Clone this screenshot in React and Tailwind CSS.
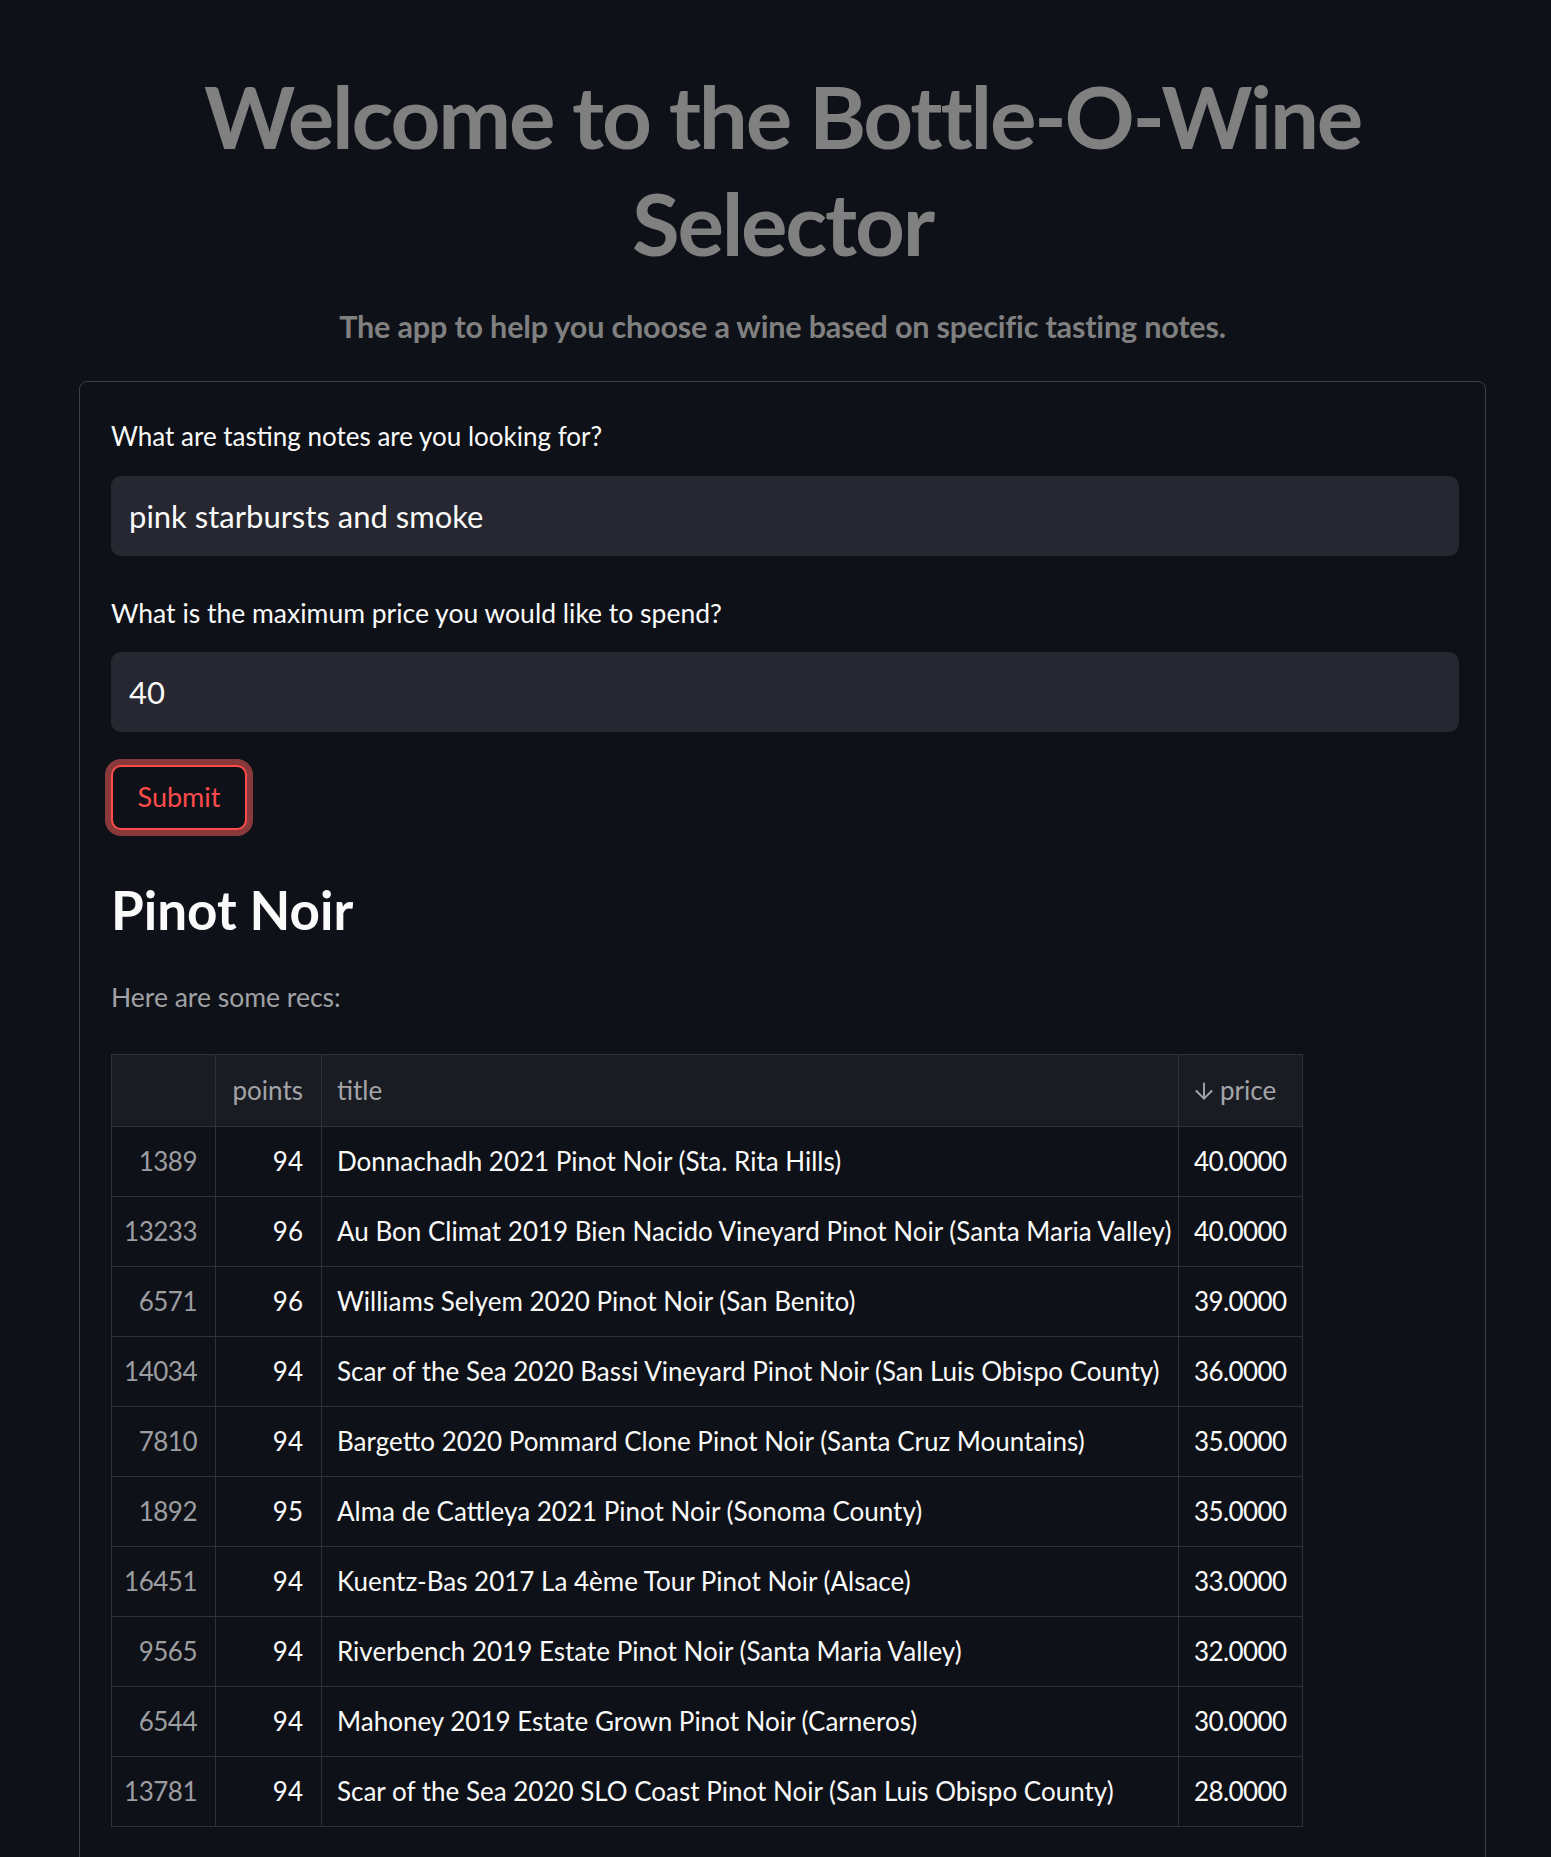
import { ArrowDown } from "lucide-react";

const wines = [
  { id: 1389, points: 94, title: "Donnachadh 2021 Pinot Noir (Sta. Rita Hills)", price: "40.0000" },
  { id: 13233, points: 96, title: "Au Bon Climat 2019 Bien Nacido Vineyard Pinot Noir (Santa Maria Valley)", price: "40.0000" },
  { id: 6571, points: 96, title: "Williams Selyem 2020 Pinot Noir (San Benito)", price: "39.0000" },
  { id: 14034, points: 94, title: "Scar of the Sea 2020 Bassi Vineyard Pinot Noir (San Luis Obispo County)", price: "36.0000" },
  { id: 7810, points: 94, title: "Bargetto 2020 Pommard Clone Pinot Noir (Santa Cruz Mountains)", price: "35.0000" },
  { id: 1892, points: 95, title: "Alma de Cattleya 2021 Pinot Noir (Sonoma County)", price: "35.0000" },
  { id: 16451, points: 94, title: "Kuentz-Bas 2017 La 4ème Tour Pinot Noir (Alsace)", price: "33.0000" },
  { id: 9565, points: 94, title: "Riverbench 2019 Estate Pinot Noir (Santa Maria Valley)", price: "32.0000" },
  { id: 6544, points: 94, title: "Mahoney 2019 Estate Grown Pinot Noir (Carneros)", price: "30.0000" },
  { id: 13781, points: 94, title: "Scar of the Sea 2020 SLO Coast Pinot Noir (San Luis Obispo County)", price: "28.0000" },
];

export default function App() {
  return (
    <div className="h-[1857px] overflow-hidden bg-[#0e1117] font-['Lato','Noto_Sans',sans-serif] text-[#fafafa]">
      <div className="ml-[79px] w-[1407px]">
        {/* Header */}
        <h1 className="pt-[62px] text-center text-[87px] leading-[107px] font-bold text-[#808080] tracking-[-2.2px]">
          Welcome to the Bottle-O-Wine
          <br />
          Selector
        </h1>
        <p className="mt-[31px] text-center text-[30.6px] leading-[40px] font-bold text-[#808080] tracking-[-0.2px]">
          The app to help you choose a wine based on specific tasting notes.
        </p>

        {/* Form panel */}
        <div className="mt-[34px] rounded-t-[8px] border border-[#3d3f45] pl-[31px] pr-[26px] pt-[36px] pb-[80px]">
          <label className="block text-[26px] leading-[36px]">What are tasting notes are you looking for?</label>
          <div className="mt-[22px] flex h-[80px] items-center rounded-[10px] bg-[#262730] px-[18px] text-[31px]">
            pink starbursts and smoke
          </div>

          <label className="mt-[39px] block text-[26.5px] leading-[36px]">What is the maximum price you would like to spend?</label>
          <div className="mt-[21px] flex h-[80px] items-center rounded-[10px] bg-[#262730] px-[18px] text-[31px]">
            40
          </div>

          <button className="mt-[33px] flex h-[65px] w-[136px] items-center justify-center rounded-[10px] border-2 border-[#ff4b4b] bg-[#0e1117] text-[27px] text-[#ff4b4b] shadow-[0_0_0_6px_#8a393b]">
            Submit
          </button>

          <h2 className="mt-[46px] text-[53px] leading-[67px] font-bold">Pinot Noir</h2>
          <p className="mt-[34px] text-[26.5px] leading-[40px] text-[#a0a1a4]">Here are some recs:</p>

          {/* Results table */}
          <table className="mt-[37px] w-[1191px] table-fixed border-collapse border border-[#2f3137] text-[26px]">
            <colgroup>
              <col className="w-[104px]" />
              <col className="w-[106px]" />
              <col className="w-[857px]" />
              <col className="w-[124px]" />
            </colgroup>
            <thead>
              <tr className="h-[72px] bg-[#1a1c24] text-[#a3a4a8]">
                <th className="border border-[#2f3137] font-normal"></th>
                <th className="border border-[#2f3137] pr-[18px] text-right font-normal">points</th>
                <th className="border border-[#2f3137] pl-[15px] text-left font-normal">title</th>
                <th className="border border-[#2f3137] pl-[12px] text-left font-normal">
                  <span className="flex items-center gap-[3px]">
                    <ArrowDown className="h-[26px] w-[26px]" strokeWidth={1.8} />
                    price
                  </span>
                </th>
              </tr>
            </thead>
            <tbody>
              {wines.map((w) => (
                <tr key={w.id} className="h-[70px]">
                  <td className="border border-[#2f3137] pr-[18px] text-right text-[#9c9da1] tracking-[-0.5px]">{w.id}</td>
                  <td className="border border-[#2f3137] pr-[18px] text-right">{w.points}</td>
                  <td className="whitespace-nowrap border border-[#2f3137] pl-[15px]">{w.title}</td>
                  <td className="border border-[#2f3137] pl-[15px] tracking-[-0.6px]">{w.price}</td>
                </tr>
              ))}
            </tbody>
          </table>
        </div>
      </div>
    </div>
  );
}
